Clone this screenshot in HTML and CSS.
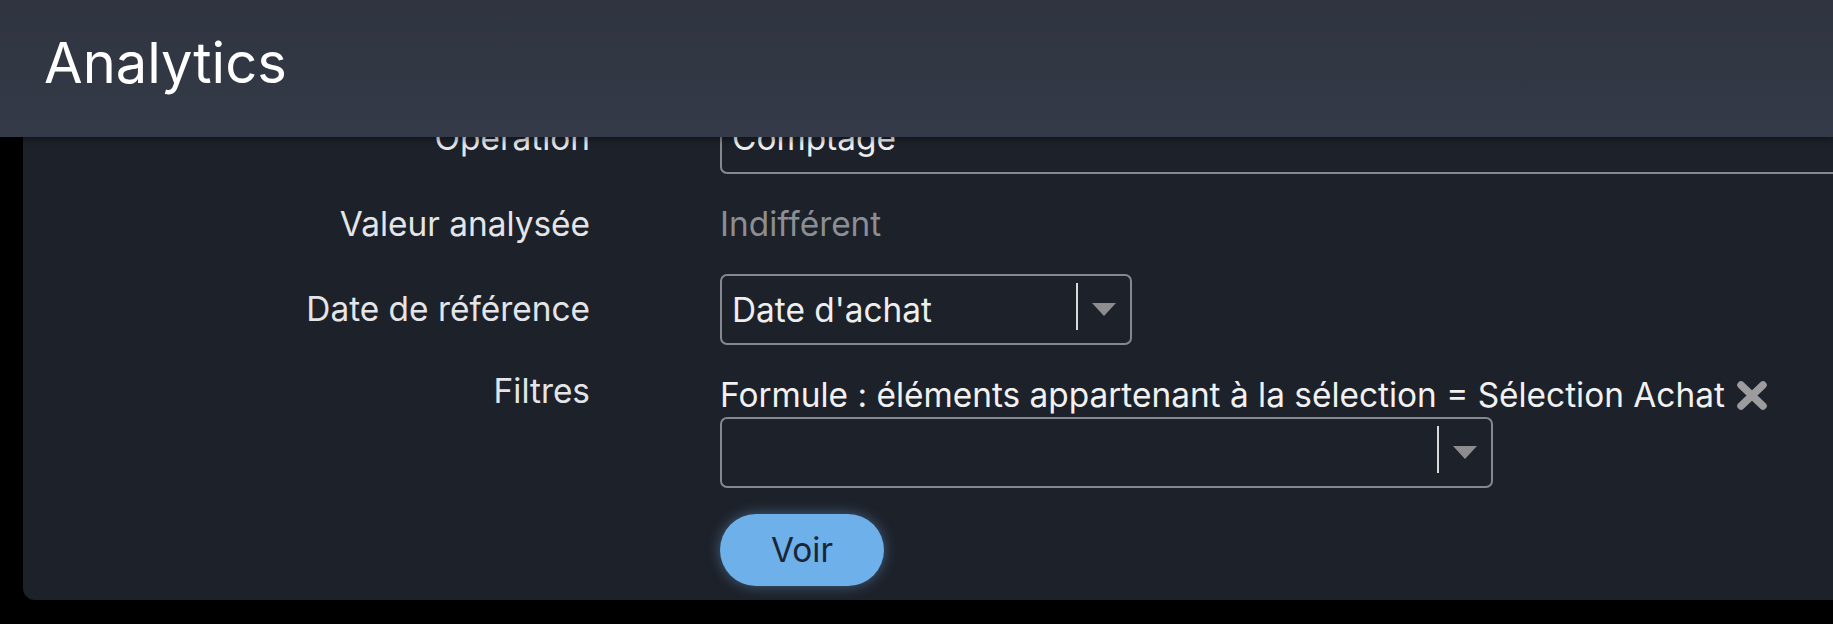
FILE: index.html
```html
<!DOCTYPE html>
<html>

<head>
    <title>Analytics</title>
    <link rel="stylesheet" href="styles.css">
</head>

<body>

    <header class="topbar">
        <h1>Analytics</h1>
    </header>

    <div class="panel">
        <form class="settings">
            <label class="field-label boxed">Opération</label>
            <div class="field">
                <div class="box wide">Comptage</div>
            </div>

            <label class="field-label">Valeur analysée</label>
            <div class="field muted">Indifférent</div>

            <label class="field-label boxed">Date de référence</label>
            <div class="field">
                <div class="select date-select">
                    <span class="select-value">Date d'achat</span>
                    <span class="select-sep"></span>
                    <svg class="select-arrow" width="24" height="13" viewBox="0 0 24 13"><path d="M0 0 H24 L12 13 Z" fill="#8d8d8f"/></svg>
                </div>
            </div>

            <label class="field-label filters">Filtres</label>
            <div class="field">
                <div class="filter-line">
                    <span>Formule : éléments appartenant à la sélection = Sélection Achat</span>
                    <svg class="remove" width="32" height="31" viewBox="0 0 32 31"><path d="M5 5 L27 26 M27 5 L5 26" stroke="#9c9c9e" stroke-width="7.5" stroke-linecap="round"/></svg>
                </div>
                <div class="select filter-select">
                    <span class="select-value"></span>
                    <span class="select-sep"></span>
                    <svg class="select-arrow" width="24" height="13" viewBox="0 0 24 13"><path d="M0 0 H24 L12 13 Z" fill="#8d8d8f"/></svg>
                </div>
            </div>

            <span></span>
            <div class="field">
                <button type="button" class="btn-voir">Voir</button>
            </div>
        </form>
    </div>

</body>

</html>
```

FILE: styles.css
```css
body {
    margin: 0;
    background-color: #000;
    font-family: Inter, "Noto Sans", sans-serif;
    overflow: hidden;
}

.topbar {
    position: fixed;
    top: 0;
    left: 0;
    right: 0;
    height: 137px;
    display: flex;
    align-items: center;
    padding: 0 0 11px 44px;
    box-sizing: border-box;
    background: linear-gradient(#2f3440, #343a47);
    box-shadow: 0 3px 6px rgba(0, 0, 0, 0.35);
    z-index: 2;
}

.topbar h1 {
    margin: 0;
    font-size: 56px;
    font-weight: 400;
    color: #ffffff;
}

.panel {
    margin-left: 23px;
    margin-right: -60px;
    padding: 103px 0 14px 0;
    background-color: #1d2129;
    border-radius: 0 0 0 12px;
}

.settings {
    display: grid;
    grid-template-columns: 567px 1fr;
    column-gap: 130px;
    row-gap: 30px;
    font-size: 33.4px;
    line-height: 40px;
}

.field-label {
    text-align: right;
    color: #e4e5e8;
}

.field-label.boxed {
    padding-top: 15px;
}

.field-label.filters {
    margin-top: -4px;
}

.field {
    color: #eeeeef;
}

.muted {
    color: #8b8e94;
}

.box {
    box-sizing: border-box;
    height: 71px;
    padding: 13px 10px;
    border: 2px solid #85888f;
    border-radius: 7px;
}

.select {
    display: flex;
    align-items: center;
    box-sizing: border-box;
    height: 71px;
    padding-left: 10px;
    border: 2px solid #85888f;
    border-radius: 7px;
}

.date-select {
    width: 412px;
}

.filter-select {
    width: 773px;
    margin-top: 2px;
}

.select-value {
    flex: 1;
}

.select-sep {
    align-self: flex-start;
    width: 2px;
    height: 47px;
    margin-top: 7px;
    background-color: #d9d9db;
}

.select-arrow {
    margin: 0 14px;
}

.filter-line {
    display: flex;
    align-items: center;
    gap: 11px;
    color: #f1f1f2;
}

.btn-voir {
    width: 164px;
    height: 72px;
    margin-top: -4px;
    border: none;
    border-radius: 36px;
    background-color: #6eb0ea;
    color: #1b2534;
    font-family: inherit;
    font-size: 33.4px;
    box-shadow: 0 0 14px rgba(110, 176, 234, 0.45);
}
```
